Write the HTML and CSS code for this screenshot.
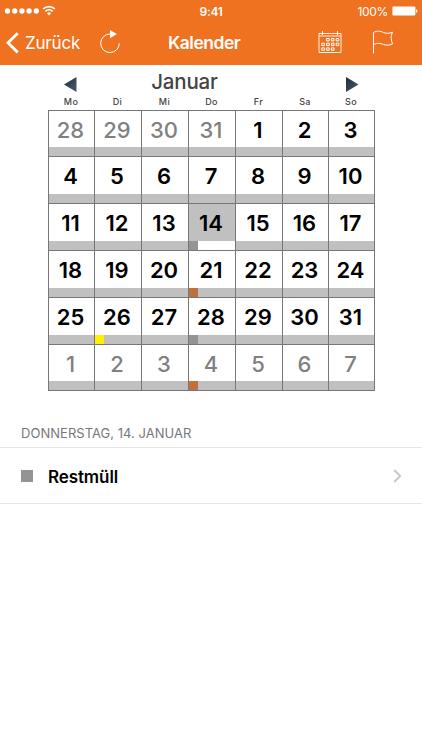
FILE: index.html
```
<!DOCTYPE html>
<html lang="de">
<head>
<meta charset="utf-8">
<title>Kalender</title>
<link rel="stylesheet" href="styles.css">
</head>
<body>
<header class="top">
  <div class="status">
    <div class="signal">
      <svg width="53" height="14" viewBox="0 0 53 14" fill="#fff"><circle cx="3.500" cy="7" r="2.700"/><circle cx="10.700" cy="7" r="2.700"/><circle cx="17.900" cy="7" r="2.700"/><circle cx="25.100" cy="7" r="2.700"/><circle cx="32.300" cy="7" r="2.700"/><g fill="none" stroke="#fff" stroke-width="1.700"><path d="M39.200 4.900a8.300 8.300 0 0 1 11.600 0M41.400 7.400a5.200 5.200 0 0 1 7.200 0"/></g><path d="M45 11.500l-2-2.200a2.900 2.900 0 0 1 4 0z"/></svg>
    </div>
    <div class="clock">9:41</div>
    <div class="power"><span>100%</span>
      <svg width="26" height="10" viewBox="0 0 26 10" fill="#fff"><rect x=".4" y=".5" width="23" height="9" rx="1"/><path d="M24 3.200q1.600.4 1.600 1.800T24 6.800z"/></svg>
    </div>
  </div>
  <nav class="nav">
    <svg class="back" width="14" height="22" viewBox="0 0 14 22"><path d="M11.700 1.200L2 10.800l9.700 9.600" fill="none" stroke="#fff" stroke-width="2.900"/></svg>
    <span class="back-label">Zurück</span>
    <svg class="reload" width="22" height="26" viewBox="0 0 22 26"><path d="M10.500 5A9.300 9.300 0 1 0 19.300 14.300" fill="none" stroke="#fff" stroke-width="1"/><path d="M10 1l6.800 4L10 9.200z" fill="#fff"/></svg>
    <h1 class="title">Kalender</h1>
    <svg class="cal-icon" width="24" height="24" viewBox="0 0 24 24" fill="none" stroke="#fff" stroke-width=".9"><path d="M1 3.500h22v19H1zM4.500 1v4M19.500 1v4M1 6h22"/><g stroke-width="1"><path d="M8.600 8.500h2.600v2.400H8.600zM13.400 8.500H16v2.400h-2.600zM18.200 8.500h2.600v2.400h-2.600zM3.800 13.200h2.600v2.400H3.800zM8.600 13.200h2.600v2.400H8.600zM13.400 13.200H16v2.400h-2.600zM18.200 13.200h2.600v2.400h-2.600zM3.800 17.900h2.600v2.400H3.800zM8.600 17.900h2.600v2.400H8.600zM13.400 17.900H16v2.400h-2.600z"/></g></svg>
    <svg class="flag" width="22" height="24" viewBox="0 0 22 24" fill="none" stroke="#fff" stroke-width="1"><path d="M1.500 23.500V2.500C5 .4 8.500 1.200 11.300 2.400s5.800 1.300 9.200-.2c-1.200 2.600-1.500 4.300-1.300 6.200s.6 3.600 1.300 5.600c-3.400 1.500-6.400 1.400-9.200.4s-6.300-1.900-9.800.4"/></svg>
  </nav>
</header>
<main>
  <section class="calendar">
    <div class="month-bar">
      <svg width="13" height="15" viewBox="0 0 13 15"><defs><linearGradient id="g" x1="0" y1="0" x2="1" y2="1"><stop offset="0" stop-color="#1e2b38"/><stop offset="1" stop-color="#4b5f74"/></linearGradient></defs><path d="M12.500 0v15L0 7.500z" fill="url(#g)"/></svg>
      <h2 class="month">Januar</h2>
      <svg width="13" height="15" viewBox="0 0 13 15"><path d="M0 0v15L12.500 7.500z" fill="url(#g)"/></svg>
    </div>
    <div class="weekdays"><span>Mo</span><span>Di</span><span>Mi</span><span>Do</span><span>Fr</span><span>Sa</span><span>So</span></div>
    <div class="days">
      <div class="day other">28</div><div class="day other">29</div><div class="day other">30</div><div class="day other">31</div><div class="day">1</div><div class="day">2</div><div class="day">3</div>
      <div class="day">4</div><div class="day">5</div><div class="day">6</div><div class="day">7</div><div class="day">8</div><div class="day">9</div><div class="day">10</div>
      <div class="day">11</div><div class="day">12</div><div class="day">13</div><div class="day selected mark gray">14</div><div class="day">15</div><div class="day">16</div><div class="day">17</div>
      <div class="day">18</div><div class="day">19</div><div class="day">20</div><div class="day mark brown">21</div><div class="day">22</div><div class="day">23</div><div class="day">24</div>
      <div class="day">25</div><div class="day mark yellow">26</div><div class="day">27</div><div class="day mark gray">28</div><div class="day">29</div><div class="day">30</div><div class="day">31</div>
      <div class="day other">1</div><div class="day other">2</div><div class="day other">3</div><div class="day other mark brown">4</div><div class="day other">5</div><div class="day other">6</div><div class="day other">7</div>
    </div>
  </section>
  <section class="events">
    <h3 class="date">DONNERSTAG, 14. JANUAR</h3>
    <div class="event">
      <span class="swatch"></span>
      <span class="name">Restmüll</span>
      <svg width="9" height="14" viewBox="0 0 9 14"><path d="M1.200 1l6 6-6 6" fill="none" stroke="#c7c7cc" stroke-width="1.800"/></svg>
    </div>
  </section>
</main>
</body>
</html>
```
FILE: styles.css
```
* { box-sizing: border-box; }
body {
  margin: 0;
  min-height: 750px;
  background: #fff;
  font-family: Inter, "Liberation Sans", sans-serif;
  color: #000;
}
h1, h2, h3 { margin: 0; font-weight: 400; }
svg { display: block; flex: none; }
.top { height: 65px; background: #ee7220; color: #fff; }
.status {
  display: grid;
  grid-template-columns: 1fr auto 1fr;
  align-items: center;
  height: 22px;
  padding: 0 4px;
}
.clock { font-size: 12px; font-weight: 600; letter-spacing: -.3px; }
.power {
  display: flex;
  justify-content: flex-end;
  align-items: center;
  gap: 4px;
  font-size: 12px;
  letter-spacing: -.35px;
}
.nav { display: flex; align-items: center; height: 42px; padding-left: 6px; }
.back-label { width: 75px; margin-left: 5px; font-size: 17px; letter-spacing: -.2px; }
.reload { margin-top: -2px; }
.title { width: 100px; margin: -1px 0 0 46px; font-size: 17.500px; font-weight: 600; letter-spacing: -.5px; }
.cal-icon { margin: -2px 0 0 50px; }
.flag { margin: -2px 0 0 30px; }
.calendar { width: 327px; margin-left: 48px; }
.month-bar {
  display: grid;
  grid-template-columns: 13px 1fr 13px;
  align-items: center;
  height: 32px;
  padding: 7px 16px 0 16px;
}
.month {
  margin-top: -5px;
  padding-right: 54px;
  font-size: 20.500px;
  font-weight: 500;
  line-height: 26px;
  letter-spacing: -.2px;
  text-align: center;
  color: #444;
}
.weekdays, .days {
  display: grid;
  grid-template-columns: 46px 47px 47px 47px 47px 46px 46px;
}
.weekdays {
  height: 13px;
  font-size: 9px;
  font-weight: 500;
  line-height: 10px;
  letter-spacing: .4px;
  text-align: center;
  color: #444;
}
.days {
  grid-template-rows: 46px 47px 47px 47px 47px 46px;
  border-top: 1px solid #777;
  border-left: 1px solid #777;
}
.day {
  position: relative;
  padding: 0 2px 9px 0;
  border-right: 1px solid #777;
  border-bottom: 1px solid #777;
  background: linear-gradient(#c0c0c0, #c0c0c0) bottom / 100% 9px no-repeat #fff;
  font-size: 22px;
  font-weight: 600;
  line-height: 38px;
  letter-spacing: 0;
  text-align: center;
}
.other { color: #808080; font-weight: 500; }
.selected { background: linear-gradient(#fff, #fff) bottom / 100% 9px no-repeat #c0c0c0; }
.mark::after {
  content: "";
  position: absolute;
  left: 0;
  bottom: 0;
  width: 9px;
  height: 9px;
}
.gray::after { background: #949494; }
.brown::after { background: #c0703c; }
.yellow::after { background: #fff000; }
.date {
  height: 57px;
  padding: 33px 21px 0;
  border-bottom: 1px solid #e7e7e9;
  font-size: 13px;
  line-height: 19px;
  letter-spacing: .03px;
  color: #77777b;
}
.event {
  display: flex;
  align-items: center;
  height: 56px;
  padding: 0 20px 0 21px;
  border-bottom: 1px solid #e7e7e9;
}
.swatch { width: 12px; height: 12px; background: #949494; }
.name { flex: 1; margin: 2px 0 0 15px; font-size: 17px; font-weight: 600; letter-spacing: -.1px; }
```
